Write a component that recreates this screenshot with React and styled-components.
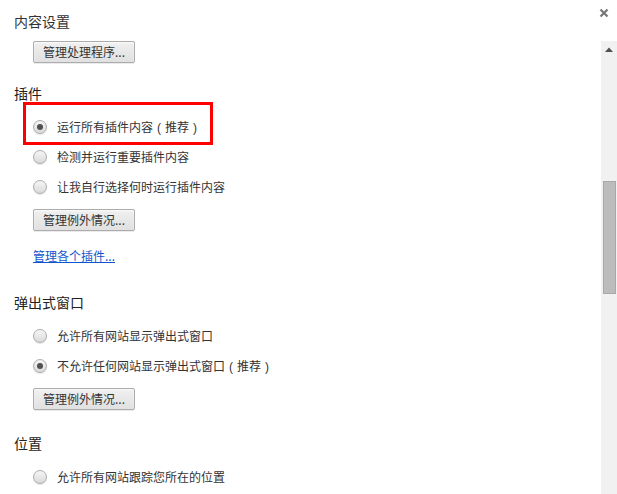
import React from "react";
import styled, { createGlobalStyle } from "styled-components";

const Global = createGlobalStyle`
  html, body { margin: 0; padding: 0; background: #fff; }
  body { font-family: "Noto Sans CJK SC", "Noto Sans", sans-serif; color: #333; }
`;

const Dialog = styled.div`
  width: 617px;
  height: 494px;
  background: #fff;
  display: flex;
  flex-direction: column;
  overflow: hidden;
`;

const Header = styled.div`
  height: 41px;
  flex: none;
  display: flex;
  align-items: flex-start;
  justify-content: space-between;
  padding: 0 0 0 14px;
  box-sizing: border-box;
`;

const Title = styled.h1`
  margin: 11px 0 0 0;
  font-size: 14px;
  font-weight: normal;
  line-height: 20px;
  color: #333;
`;

const Close = styled.button`
  margin: 8px 8px 0 0;
  padding: 0;
  width: 10px;
  height: 10px;
  border: 0;
  background: none;
  display: flex;
  cursor: pointer;
`;

const Body = styled.div`
  flex: 1;
  display: flex;
  min-height: 0;
`;

const Content = styled.div`
  flex: 1;
  overflow: hidden;
  padding-left: 14px;
`;

const Scrollbar = styled.div`
  width: 16px;
  flex: none;
  background: #f1f1f1;
  display: flex;
  flex-direction: column;
`;

const ArrowBox = styled.div`
  height: 17px;
  display: flex;
  align-items: center;
  justify-content: center;
`;

const Thumb = styled.div`
  margin: ${(p) => p.$offset}px 1px 0 2px;
  height: ${(p) => p.$size}px;
  background: #bcbcbc;
  border: 1px solid #a8a8a8;
  box-sizing: border-box;
`;

const Section = styled.section`
  margin-top: ${(p) => p.$top}px;
`;

const SectionTitle = styled.h2`
  margin: 0 0 9px 0;
  font-size: 14px;
  font-weight: normal;
  line-height: 20px;
  color: #222;
`;

const Button = styled.button`
  display: block;
  margin: ${(p) => p.$top || 0}px 0 0 19px;
  height: 22px;
  padding: 0 9px;
  font-family: "Noto Sans CJK SC", "Noto Sans", sans-serif;
  font-size: 12px;
  line-height: 20px;
  color: #333;
  background: linear-gradient(#f0f0f0, #e0e0e0);
  border: 1px solid #acacac;
  border-radius: 2px;
  box-shadow: 0 1px 0 rgba(0, 0, 0, 0.08), inset 0 1px 2px rgba(255, 255, 255, 0.75);
`;

const RadioRow = styled.label`
  position: relative;
  display: flex;
  align-items: center;
  height: 30px;
  margin-left: 19px;
  font-size: 12px;
  color: #333;
`;

const RadioDot = styled.span`
  width: 14px;
  height: 14px;
  box-sizing: border-box;
  border-radius: 50%;
  border: 1px solid #acacac;
  background: linear-gradient(#f5f5f5, #dadada);
  box-shadow: 0 1px 1px rgba(0, 0, 0, 0.1);
  margin-right: 10px;
  display: flex;
  align-items: center;
  justify-content: center;
  &::after {
    content: "";
    width: 6px;
    height: 6px;
    border-radius: 50%;
    background: ${(p) => (p.$checked ? "#505050" : "transparent")};
  }
`;

const Label = styled.span`
  line-height: 20px;
`;

const Paren = styled.span`
  font-family: "Liberation Sans", sans-serif;
  margin: 0 4px;
`;

const Highlight = styled.span`
  position: absolute;
  left: -10px;
  top: -10px;
  width: 190px;
  height: 43px;
  border: 3px solid #f00;
  box-sizing: border-box;
  pointer-events: none;
`;

const Link = styled.a`
  display: inline-block;
  margin: 15px 0 0 19px;
  font-size: 12px;
  line-height: 20px;
  color: #1155cc;
  text-decoration: underline;
`;

const Radio = ({ checked, children, highlight }) => (
  <RadioRow>
    {highlight && <Highlight />}
    <RadioDot $checked={checked} />
    <Label>{children}</Label>
  </RadioRow>
);

const Recommended = () => (
  <>
    <Paren>(</Paren>推荐<Paren>)</Paren>
  </>
);

export default function App() {
  return (
    <>
      <Global />
      <Dialog>
        <Header>
          <Title>内容设置</Title>
          <Close aria-label="关闭">
            <svg width="10" height="10" viewBox="0 0 10 10">
              <path d="M1.5 1.5 L8.5 8.5 M8.5 1.5 L1.5 8.5" stroke="#777" strokeWidth="2.2" />
            </svg>
          </Close>
        </Header>
        <Body>
          <Content>
            <Button>管理处理程序...</Button>
            <Section $top={20}>
              <SectionTitle>插件</SectionTitle>
              <Radio checked highlight>运行所有插件内容<Recommended /></Radio>
              <Radio>检测并运行重要插件内容</Radio>
              <Radio>让我自行选择何时运行插件内容</Radio>
              <Button $top={7}>管理例外情况...</Button>
              <Link href="#">管理各个插件...</Link>
            </Section>
            <Section $top={26}>
              <SectionTitle>弹出式窗口</SectionTitle>
              <Radio>允许所有网站显示弹出式窗口</Radio>
              <Radio checked>不允许任何网站显示弹出式窗口<Recommended /></Radio>
              <Button $top={7}>管理例外情况...</Button>
            </Section>
            <Section $top={23}>
              <SectionTitle>位置</SectionTitle>
              <Radio>允许所有网站跟踪您所在的位置</Radio>
            </Section>
          </Content>
          <Scrollbar>
            <ArrowBox>
              <svg width="8" height="5" viewBox="0 0 8 5">
                <path d="M0 5 L4 0.5 L8 5 Z" fill="#505050" />
              </svg>
            </ArrowBox>
            <Thumb $offset={123} $size={113} />
          </Scrollbar>
        </Body>
      </Dialog>
    </>
  );
}
